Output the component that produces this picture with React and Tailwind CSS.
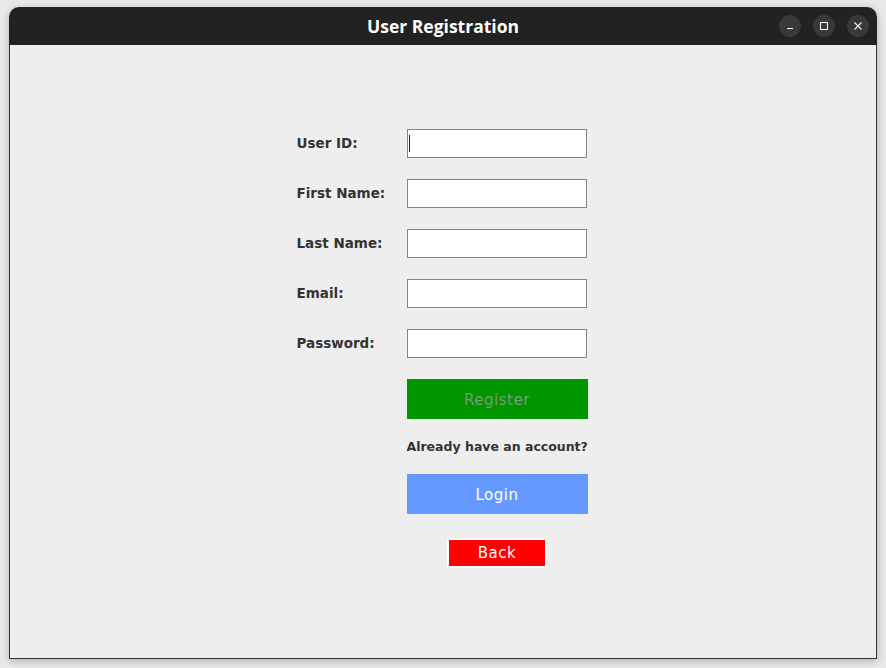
import { useState } from "react";

const fields = [
  { key: "userId", label: "User ID:" },
  { key: "firstName", label: "First Name:" },
  { key: "lastName", label: "Last Name:" },
  { key: "email", label: "Email:" },
  { key: "password", label: "Password:", type: "password" },
];

function WindowButton({ children }) {
  return (
    <button className="flex h-[22px] w-[22px] items-center justify-center rounded-full bg-[#383838] text-[#f0f0f0]">
      {children}
    </button>
  );
}

export default function App() {
  const [values, setValues] = useState({});

  return (
    <div className="h-[668px] w-[886px] bg-[#e9e9e9] pl-[9px] pt-[7px]" style={{ fontFamily: '"DejaVu Sans", sans-serif' }}>
      <div className="flex h-[652px] w-[868px] flex-col overflow-hidden rounded-t-[10px] shadow-[0_2px_8px_rgba(0,0,0,0.25)]">
        <div className="relative flex h-[38px] shrink-0 items-center justify-center bg-[#222222]">
          <span className="text-[17.5px] font-bold text-white" style={{ fontFamily: '"Open Sans", sans-serif' }}>
            User Registration
          </span>
          <div className="absolute right-[8px] top-[8px] flex gap-[12px]">
            <WindowButton>
              <svg width="10" height="10" viewBox="0 0 10 10">
                <path d="M2 7.5h6" stroke="currentColor" strokeWidth="1.2" />
              </svg>
            </WindowButton>
            <WindowButton>
              <svg width="10" height="10" viewBox="0 0 10 10">
                <rect x="1.5" y="1.5" width="7" height="7" fill="none" stroke="currentColor" strokeWidth="1.1" />
              </svg>
            </WindowButton>
            <WindowButton>
              <svg width="10" height="10" viewBox="0 0 10 10">
                <path d="M1.5 1.5l7 7M8.5 1.5l-7 7" stroke="currentColor" strokeWidth="1.2" />
              </svg>
            </WindowButton>
          </div>
        </div>

        <div className="flex flex-1 flex-col items-center border-x border-b border-[#333333] bg-[#eeeeee] pt-[84px]">
          <div className="mr-[2px] flex flex-col gap-[21px]">
            {fields.map((field) => (
              <div key={field.key} className="flex items-center">
                <label className="w-[110px] text-[13.5px] font-bold text-[#333333]">{field.label}</label>
                <div className="relative">
                  <input
                    type={field.type || "text"}
                    value={values[field.key] || ""}
                    onChange={(event) => setValues((prev) => ({ ...prev, [field.key]: event.target.value }))}
                    className="block h-[29px] w-[180px] border border-[#7a8894] bg-white px-[2px] text-[13px] outline-none caret-[#222222]"
                  />
                  {field.key === "userId" && !values.userId && (
                    <span className="pointer-events-none absolute left-[2px] top-[6px] h-[17px] w-[1px] bg-[#222222]" />
                  )}
                </div>
              </div>
            ))}

            <div className="flex w-[291px] flex-col pl-[110px]">
              <button className="h-[40px] w-[181px] bg-[#009600] pt-[2px] text-[15px] tracking-[0.5px] text-[#7a9a7a]">
                Register
              </button>
              <p className="mt-[20px] w-[181px] whitespace-nowrap text-[12.5px] leading-[15px] font-bold text-[#333333]">
                Already have an account?
              </p>
              <button className="mt-[20px] h-[40px] w-[181px] bg-[#6699ff] pt-[2px] text-[15px] tracking-[0.5px] text-white">
                Login
              </button>
              <div className="mt-[24px] flex w-[181px] justify-center">
                <button className="h-[30px] w-[100px] border-2 border-white bg-[#ff0000] pt-[1px] text-[15px] tracking-[0.5px] text-white">
                  Back
                </button>
              </div>
            </div>
          </div>
        </div>
      </div>
    </div>
  );
}
